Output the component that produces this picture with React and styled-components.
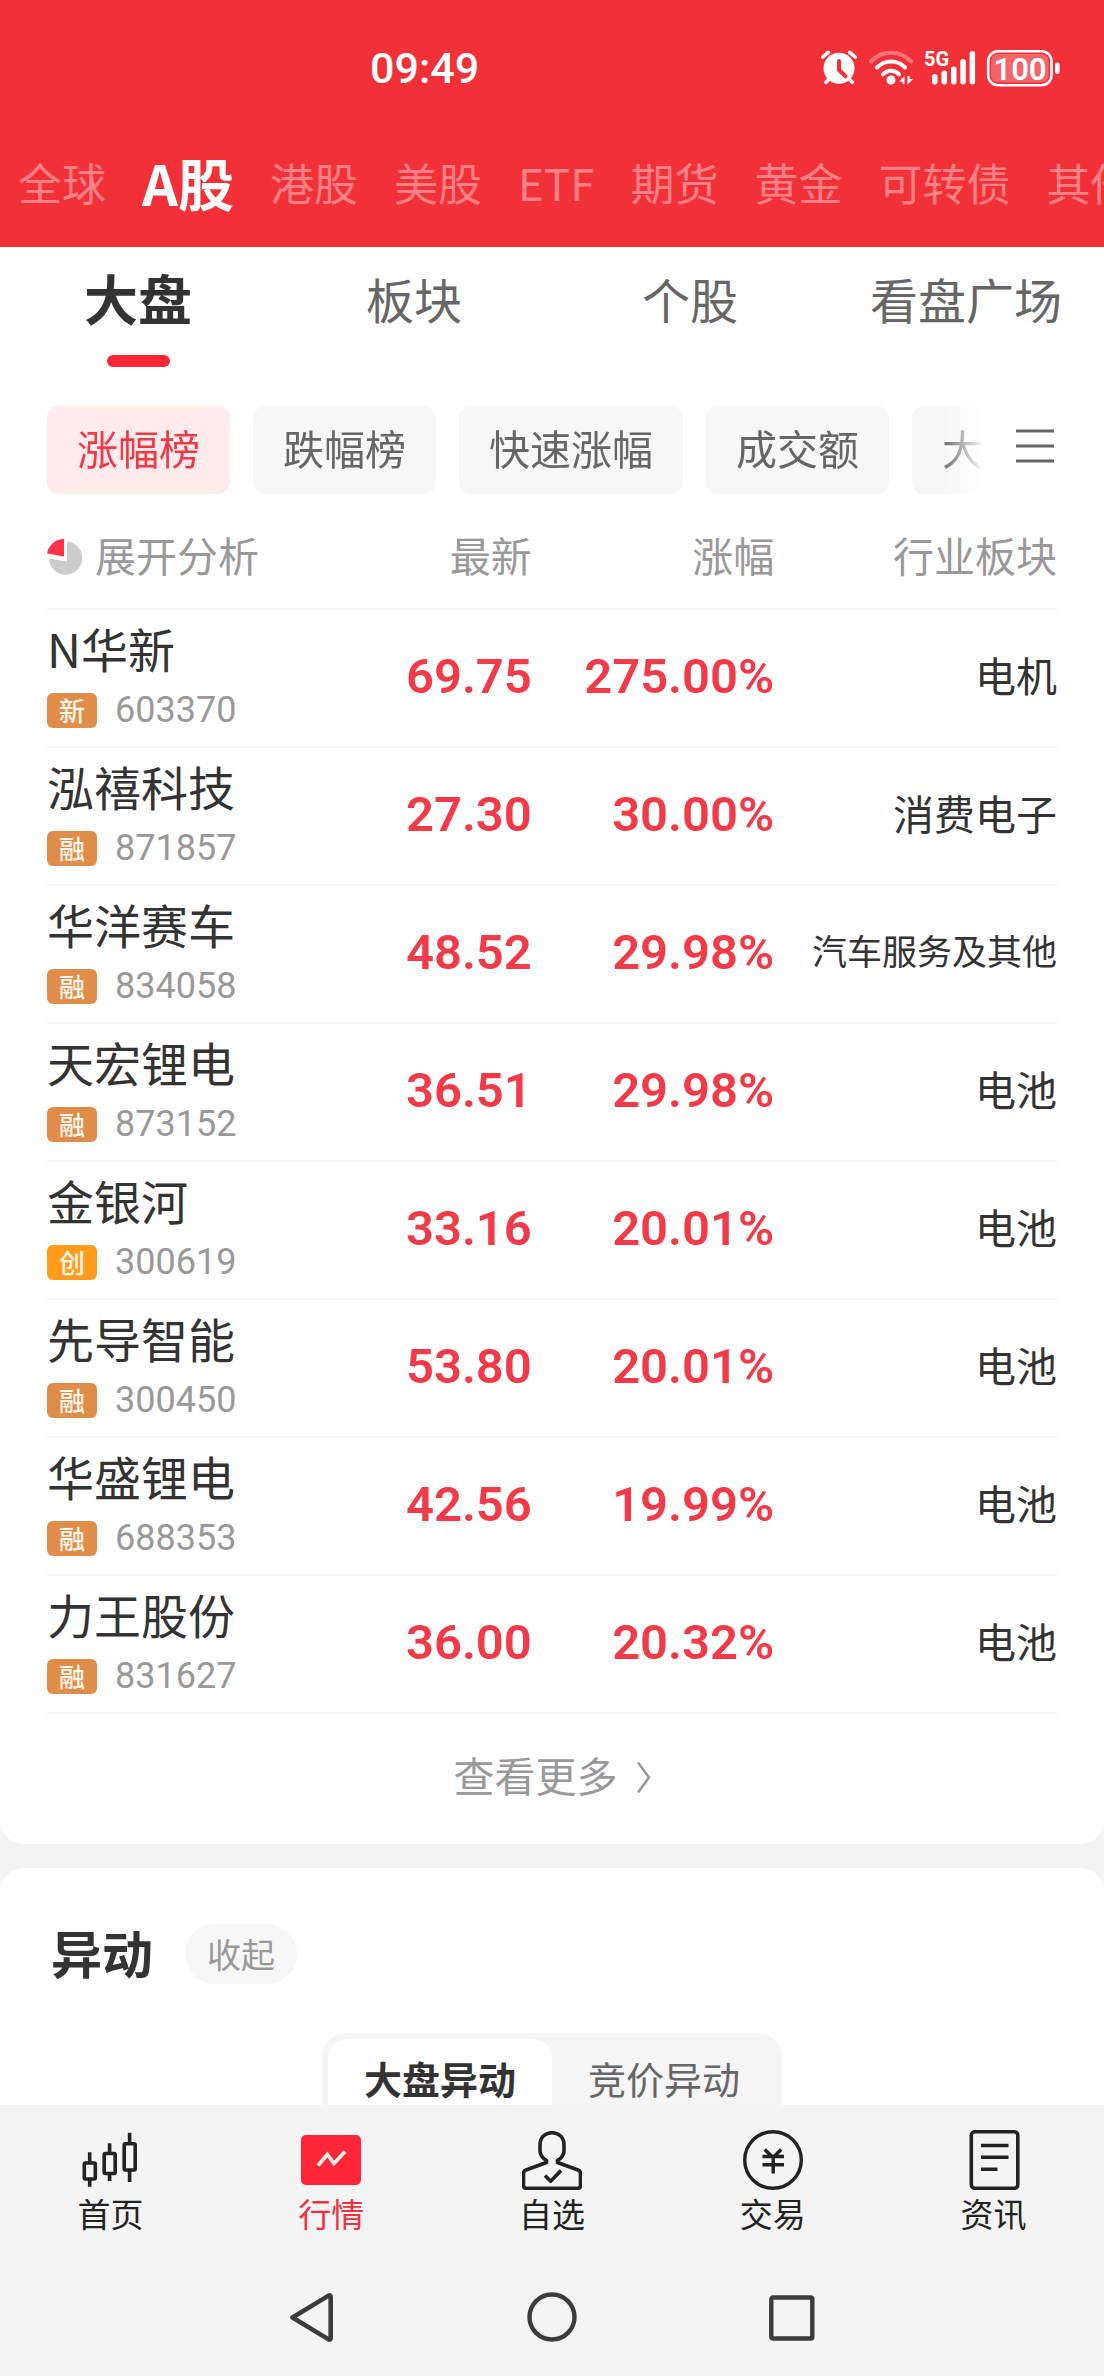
import React, { useState } from 'react';
import styled, { createGlobalStyle } from 'styled-components';

const GlobalStyle = createGlobalStyle`
  * {
    box-sizing: border-box;
  }
  body {
    margin: 0;
    background: #f4f4f4;
    color: #333333;
    font-family: 'Noto Sans CJK SC', 'Noto Sans', sans-serif;
  }
  button {
    border: none;
    padding: 0;
    margin: 0;
    background: none;
    color: inherit;
    font: inherit;
    cursor: pointer;
  }
  a {
    color: inherit;
    text-decoration: none;
  }
  svg {
    display: block;
    flex-shrink: 0;
  }
`;

const Screen = styled.div`
  height: 100vh;
  display: flex;
  flex-direction: column;
  overflow: hidden;
`;

const Header = styled.header`
  flex-shrink: 0;
  background: #f23038;
  color: #ffffff;
`;

const StatusBar = styled.div`
  height: 136px;
  display: grid;
  grid-template-columns: 1fr 2fr;
  align-items: center;
`;

const Clock = styled.time`
  grid-column: 2;
  grid-row: 1;
  padding-left: 2px;
  font-family: Roboto, sans-serif;
  font-size: 43px;
  font-weight: 500;
  line-height: 52px;
`;

const StatusIcons = styled.div`
  grid-column: 2;
  grid-row: 1;
  display: flex;
  align-items: center;
  justify-content: flex-end;
  gap: 10px;
  padding-right: 44px;
`;

const MarketNav = styled.nav`
  height: 111px;
  display: flex;
  align-items: center;
  gap: 36px;
  padding: 0 0 20px 18px;
  overflow: hidden;
`;

const MarketLink = styled.a`
  flex-shrink: 0;
  white-space: nowrap;
  font-size: ${({ $active }) => ($active ? '56px' : '44px')};
  font-weight: ${({ $active }) => ($active ? 700 : 400)};
  line-height: 64px;
  color: ${({ $active }) => ($active ? '#ffffff' : '#ff8085')};
`;

const Content = styled.main`
  flex: 1;
  min-height: 0;
  display: flex;
  flex-direction: column;
  gap: 24px;
  overflow-y: auto;
  scrollbar-width: none;
`;

const Card = styled.section`
  flex-shrink: 0;
  background: #ffffff;
  border-radius: ${({ $first }) => ($first ? '0 0 24px 24px' : '24px')};
`;

const SubTabs = styled.div`
  display: flex;
  padding-top: 18px;
`;

const SubTab = styled.button`
  flex: 1 1 0;
  display: flex;
  flex-direction: column;
  align-items: center;
  gap: 24px;
  white-space: nowrap;
  font-size: ${({ $active }) => ($active ? '54px' : '48px')};
  font-weight: ${({ $active }) => ($active ? 700 : 400)};
  line-height: 66px;
  color: ${({ $active }) => ($active ? '#333333' : '#666666')};

  &::after {
    content: '';
    width: 63px;
    height: 12px;
    border-radius: 6px;
    background: ${({ $active }) => ($active ? '#ff2638' : 'transparent')};
  }
`;

const FilterRow = styled.div`
  display: flex;
  align-items: center;
  gap: 31px;
  padding: 39px 47px 0;
`;

const Chips = styled.div`
  flex: 1;
  min-width: 0;
  display: flex;
  gap: 23px;
  overflow: hidden;
  mask-image: linear-gradient(to left, transparent, #000000 45px);
`;

const Chip = styled.button`
  flex-shrink: 0;
  height: 88px;
  padding: 0 30px 6px;
  border-radius: 12px;
  white-space: nowrap;
  font-size: 41px;
  line-height: 56px;
  background: ${({ $active }) => ($active ? '#ffebec' : '#f7f7f7')};
  color: ${({ $active }) => ($active ? '#f03a48' : '#666666')};
`;

const MenuButton = styled.button`
  width: 41px;
  flex-shrink: 0;
  padding-bottom: 8px;
`;

const TableWrap = styled.div`
  padding: 0 47px;
`;

const Table = styled.table`
  width: 100%;
  table-layout: fixed;
  border-collapse: separate;
  border-spacing: 0;
`;

const Th = styled.th`
  width: ${({ $width }) => $width};
  padding: 32px 0 26px;
  border-bottom: 2px solid #f4f4f4;
  text-align: ${({ $left }) => ($left ? 'left' : 'right')};
  white-space: nowrap;
  font-size: 41px;
  font-weight: 400;
  line-height: 56px;
  color: #999999;
`;

const Expand = styled.button`
  display: flex;
  align-items: center;
  gap: 12px;
`;

const Td = styled.td`
  height: 138px;
  padding: 10px 0 18px;
  border-bottom: 2px solid #f4f4f4;
  text-align: right;
  white-space: nowrap;
  vertical-align: middle;
`;

const NameCell = styled(Td)`
  text-align: left;
`;

const FigureCell = styled(Td)`
  padding: 13px 0 15px;
`;

const Name = styled.div`
  font-size: 47px;
  line-height: 56px;
`;

const Meta = styled.div`
  display: flex;
  align-items: center;
  gap: 18px;
  margin-top: 17px;
`;

const Badge = styled.span`
  width: 50px;
  height: 35px;
  border-radius: 6px;
  text-align: center;
  font-size: 26px;
  font-weight: 500;
  line-height: 33px;
  color: #fff8ee;
  background: ${({ $orange }) => ($orange ? '#ff9c1c' : '#e18d4a')};
`;

const Code = styled.span`
  font-family: Roboto, sans-serif;
  font-size: 36px;
  line-height: 35px;
  color: #999999;
`;

const Figure = styled.span`
  font-family: Roboto, sans-serif;
  font-size: 49px;
  font-weight: 600;
  line-height: 56px;
  color: #f23a48;
`;

const Sector = styled.span`
  font-size: ${({ $long }) => ($long ? '35px' : '41px')};
  line-height: 56px;
`;

const MoreLink = styled.a`
  display: flex;
  align-items: center;
  justify-content: center;
  gap: 19px;
  padding: 32px 0 42px;
  font-size: 41px;
  line-height: 56px;
  color: #999999;
`;

const SectionHead = styled.div`
  display: flex;
  align-items: center;
  gap: 32px;
  padding: 56px 51px 49px;
`;

const SectionTitle = styled.h2`
  margin: 0;
  padding-bottom: 4px;
  font-size: 51px;
  font-weight: 700;
  line-height: 56px;
`;

const Pill = styled.button`
  height: 60px;
  padding: 0 22px;
  border-radius: 30px;
  font-size: 34px;
  line-height: 48px;
  background: #f7f7f7;
  color: #999999;
`;

const Segmented = styled.div`
  width: fit-content;
  margin: 0 auto 40px;
  padding: 6px;
  display: flex;
  border-radius: 24px;
  background: #f5f5f5;
`;

const Segment = styled.button`
  height: 84px;
  padding: 0 36px 6px;
  border-radius: 20px;
  white-space: nowrap;
  font-size: 38px;
  font-weight: ${({ $active }) => ($active ? 700 : 400)};
  line-height: 56px;
  color: ${({ $active }) => ($active ? '#333333' : '#666666')};
  background: ${({ $active }) => ($active ? '#ffffff' : 'transparent')};
`;

const Footer = styled.footer`
  flex-shrink: 0;
  background: #f4f4f4;
`;

const BottomNav = styled.nav`
  display: flex;
  padding-top: 25px;
`;

const NavItem = styled.a`
  flex: 1 1 0;
  display: flex;
  flex-direction: column;
  align-items: center;
  gap: 3px;
  font-size: 33px;
  line-height: 40px;
  color: ${({ $active }) => ($active ? '#f03040' : '#222222')};
`;

const SystemNav = styled.div`
  display: flex;
  justify-content: center;
  gap: 190px;
  padding: 59px 0 34px;
  color: #3c3c3c;
`;

const AlarmIcon = () => (
  <svg width="38" height="36" viewBox="0 0 38 36" fill="none" strokeLinecap="round">
    <circle cx="19" cy="18.3" r="15.5" fill="#fff" />
    <path d="M2.8 7 8.3 2.3M29.7 2.3 35.2 7M9.5 28.5 6 32.3M28.5 28.5 32.3 32.3" stroke="#fff" strokeWidth="3.6" />
    <path d="M19 11v9l6.5 6.3" stroke="#f23038" strokeWidth="4" strokeLinejoin="round" />
  </svg>
);

const WifiIcon = () => (
  <svg width="46" height="36" viewBox="0 0 46 36" fill="none" strokeLinecap="round" strokeWidth="4">
    <path d="M3 11.5C14-.1 32-.1 43 11.5" stroke="#ff7377" />
    <path d="M9 17.5c8-8 20-8 28 0M15 24.3c4.600-4.600 11.400-4.600 16 0" stroke="#fff" />
    <circle cx="23" cy="30" r="4.500" fill="#fff" />
    <path d="M31 31.500 36.500 26v8h-2v-2.500zM45 29l-5.500 5.500V26h2v3z" fill="#fff" />
  </svg>
);

const SignalIcon = () => (
  <svg width="52" height="36" viewBox="0 0 52 36" fill="#fff" overflow="visible">
    <text x="0" y="16" fontFamily="Roboto, sans-serif" fontSize="20" fontWeight="700">5G</text>
    <rect x="8" y="24" width="5.500" height="10.500" rx="2.700" />
    <rect x="17.500" y="20.500" width="5.500" height="14" rx="2.700" />
    <rect x="27" y="16.500" width="5.500" height="18" rx="2.700" />
    <rect x="36.300" y="9" width="5.500" height="25.500" rx="2.700" />
    <rect x="45.600" y="1" width="5.500" height="33.500" rx="2.700" />
  </svg>
);

const BatteryIcon = () => (
  <svg width="74" height="38" viewBox="0 0 74 38">
    <rect x="2.200" y="2.200" width="63.300" height="34" rx="10" fill="none" stroke="#fff" strokeWidth="2.600" />
    <rect x="5" y="5" width="57.700" height="28.400" rx="7" fill="#fff" fillOpacity="0.250" />
    <rect x="69" y="13.500" width="4.600" height="11.500" rx="2.300" fill="#fff" />
    <text x="34" y="30.500" textAnchor="middle" fill="#fff" fontFamily="Roboto, sans-serif" fontSize="31" fontWeight="600">
      100
    </text>
  </svg>
);

const MenuIcon = () => (
  <svg width="38" height="34" viewBox="0 0 38 34" stroke="#666" strokeWidth="3">
    <path d="M0 2h38M0 17h38M0 32h38" />
  </svg>
);

const PieIcon = () => (
  <svg width="36" height="44" viewBox="0 0 36 44">
    <path d="M17 7v17.500L0 21.600A17.300 17.300 0 0 1 17 7z" fill="#ff3348" />
    <path d="M20 9.500A16.600 16.600 0 1 1 2 26.600l18 3z" fill="#cccccc" />
  </svg>
);

const ChevronIcon = () => (
  <svg width="14" height="38" viewBox="0 0 14 38" fill="none" stroke="#999" strokeWidth="2.500">
    <path d="M1 7.500 12 22.500 1 37.500" />
  </svg>
);

const CandlesIcon = () => (
  <svg width="60" height="60" viewBox="0 0 60 60" fill="none" stroke="currentColor" strokeWidth="3.600">
    <path d="M9.700 22.300v9.500M9.700 50v6.700M29.600 13.300v9M29.600 44v7M49.600 2.700v10M49.600 41v11" />
    <rect x="4.300" y="33" width="11" height="16" rx="1.200" />
    <rect x="24.200" y="23.500" width="11" height="20" rx="1.200" />
    <rect x="44.200" y="13.800" width="11" height="26.200" rx="1.200" />
  </svg>
);

const QuotesIcon = () => (
  <svg width="60" height="60" viewBox="0 0 60 60">
    <rect y="5" width="60" height="50" rx="5" fill="#ff2638" />
    <path d="M17 35.500 26.300 24.500 33 33.500 44 21.500" fill="none" stroke="#ffeef0" strokeWidth="3.600" />
  </svg>
);

const PersonIcon = () => (
  <svg width="60" height="60" viewBox="0 0 60 60" fill="none" stroke="currentColor" strokeWidth="3.600" strokeLinejoin="round">
    <path d="M24.500 30.500C20.500 28 18 25.500 18 21v-6C18 7.500 23 2.700 30 2.700S42 7.500 42 15v6c0 4.500-2.500 7-6.500 9.500v2L56 40c1.600.6 2.500 1.700 2.500 3.300V55.500c0 1.800-1 2.800-2.800 2.800H4.300c-1.800 0-2.800-1-2.800-2.800V43.300C1.500 41.700 2.400 40.600 4 40l20.500-7.500z" />
    <path d="M23 45.500 28.700 51.300 39 40.500" />
  </svg>
);

const YenIcon = () => (
  <svg width="60" height="60" viewBox="0 0 60 60" fill="none" stroke="currentColor" strokeWidth="3.400">
    <circle cx="30" cy="30" r="28.300" />
    <path d="M21.800 19.500 30 27.500 38.200 19.500M19.500 26.500h21.500M19.500 34.700h21.500M30.200 26v17.500" />
  </svg>
);

const NewsIcon = () => (
  <svg width="60" height="60" viewBox="0 0 60 60" fill="none" stroke="currentColor" strokeWidth="3.600">
    <rect x="7.300" y="1.800" width="46.500" height="56.500" rx="3.500" />
    <path d="M17 15.500h27.500M17 27.300h27.500M17 39.300h16.500" />
  </svg>
);

const BackIcon = () => (
  <svg width="50" height="50" viewBox="0 0 50 50" fill="none" stroke="currentColor" strokeWidth="4.600" strokeLinejoin="round">
    <path d="M5.500 25.500 42 3.400Q43.700 3 43.700 5v41q0 2-1.700 1.600z" />
  </svg>
);

const HomeIcon = () => (
  <svg width="50" height="50" viewBox="0 0 50 50" fill="none" stroke="currentColor" strokeWidth="4.400">
    <circle cx="25" cy="25" r="22.500" />
  </svg>
);

const RecentIcon = () => (
  <svg width="50" height="50" viewBox="0 0 50 50" fill="none" stroke="currentColor" strokeWidth="4.400">
    <rect x="4.300" y="5.500" width="41" height="41" rx="1.500" />
  </svg>
);

const markets = ['全球', 'A股', '港股', '美股', 'ETF', '期货', '黄金', '可转债', '其他'];
const subTabs = ['大盘', '板块', '个股', '看盘广场'];
const filters = ['涨幅榜', '跌幅榜', '快速涨幅', '成交额', '大单净量'];

const stocks = [
  { name: 'N华新', tag: '新', code: '603370', price: '69.75', change: '275.00%', sector: '电机' },
  { name: '泓禧科技', tag: '融', code: '871857', price: '27.30', change: '30.00%', sector: '消费电子' },
  { name: '华洋赛车', tag: '融', code: '834058', price: '48.52', change: '29.98%', sector: '汽车服务及其他' },
  { name: '天宏锂电', tag: '融', code: '873152', price: '36.51', change: '29.98%', sector: '电池' },
  { name: '金银河', tag: '创', code: '300619', price: '33.16', change: '20.01%', sector: '电池' },
  { name: '先导智能', tag: '融', code: '300450', price: '53.80', change: '20.01%', sector: '电池' },
  { name: '华盛锂电', tag: '融', code: '688353', price: '42.56', change: '19.99%', sector: '电池' },
  { name: '力王股份', tag: '融', code: '831627', price: '36.00', change: '20.32%', sector: '电池' },
];

const navItems = [
  { label: '首页', icon: <CandlesIcon /> },
  { label: '行情', icon: <QuotesIcon /> },
  { label: '自选', icon: <PersonIcon /> },
  { label: '交易', icon: <YenIcon /> },
  { label: '资讯', icon: <NewsIcon /> },
];

const StockRow = ({ stock }) => (
  <tr>
    <NameCell>
      <Name>{stock.name}</Name>
      <Meta>
        <Badge $orange={stock.tag === '创'}>{stock.tag}</Badge>
        <Code>{stock.code}</Code>
      </Meta>
    </NameCell>
    <FigureCell>
      <Figure>{stock.price}</Figure>
    </FigureCell>
    <FigureCell>
      <Figure>{stock.change}</Figure>
    </FigureCell>
    <Td>
      <Sector $long={stock.sector.length > 4}>{stock.sector}</Sector>
    </Td>
  </tr>
);

const App = () => {
  const [subTab, setSubTab] = useState('大盘');
  const [filter, setFilter] = useState('涨幅榜');
  const [segment, setSegment] = useState('大盘异动');

  return (
    <Screen>
      <GlobalStyle />
      <Header>
        <StatusBar>
          <Clock>09:49</Clock>
          <StatusIcons>
            <AlarmIcon />
            <WifiIcon />
            <SignalIcon />
            <BatteryIcon />
          </StatusIcons>
        </StatusBar>
        <MarketNav>
          {markets.map(item => (
            <MarketLink key={item} href="#" $active={item === 'A股'}>
              {item}
            </MarketLink>
          ))}
        </MarketNav>
      </Header>

      <Content>
        <Card $first>
          <SubTabs>
            {subTabs.map(item => (
              <SubTab key={item} $active={item === subTab} onClick={() => setSubTab(item)}>
                {item}
              </SubTab>
            ))}
          </SubTabs>
          <FilterRow>
            <Chips>
              {filters.map(item => (
                <Chip key={item} $active={item === filter} onClick={() => setFilter(item)}>
                  {item}
                </Chip>
              ))}
            </Chips>
            <MenuButton aria-label="全部榜单">
              <MenuIcon />
            </MenuButton>
          </FilterRow>
          <TableWrap>
            <Table>
              <thead>
                <tr>
                  <Th $left $width="28%">
                    <Expand>
                      <PieIcon />
                      展开分析
                    </Expand>
                  </Th>
                  <Th $width="20%">最新</Th>
                  <Th $width="24%">涨幅</Th>
                  <Th $width="28%">行业板块</Th>
                </tr>
              </thead>
              <tbody>
                {stocks.map(stock => (
                  <StockRow key={stock.code} stock={stock} />
                ))}
              </tbody>
            </Table>
          </TableWrap>
          <MoreLink href="#">
            查看更多
            <ChevronIcon />
          </MoreLink>
        </Card>

        <Card>
          <SectionHead>
            <SectionTitle>异动</SectionTitle>
            <Pill>收起</Pill>
          </SectionHead>
          <Segmented>
            {['大盘异动', '竞价异动'].map(item => (
              <Segment key={item} $active={item === segment} onClick={() => setSegment(item)}>
                {item}
              </Segment>
            ))}
          </Segmented>
        </Card>
      </Content>

      <Footer>
        <BottomNav>
          {navItems.map(item => (
            <NavItem key={item.label} href="#" $active={item.label === '行情'}>
              {item.icon}
              {item.label}
            </NavItem>
          ))}
        </BottomNav>
        <SystemNav>
          <button aria-label="返回">
            <BackIcon />
          </button>
          <button aria-label="主屏幕">
            <HomeIcon />
          </button>
          <button aria-label="最近任务">
            <RecentIcon />
          </button>
        </SystemNav>
      </Footer>
    </Screen>
  );
};

export default App;
